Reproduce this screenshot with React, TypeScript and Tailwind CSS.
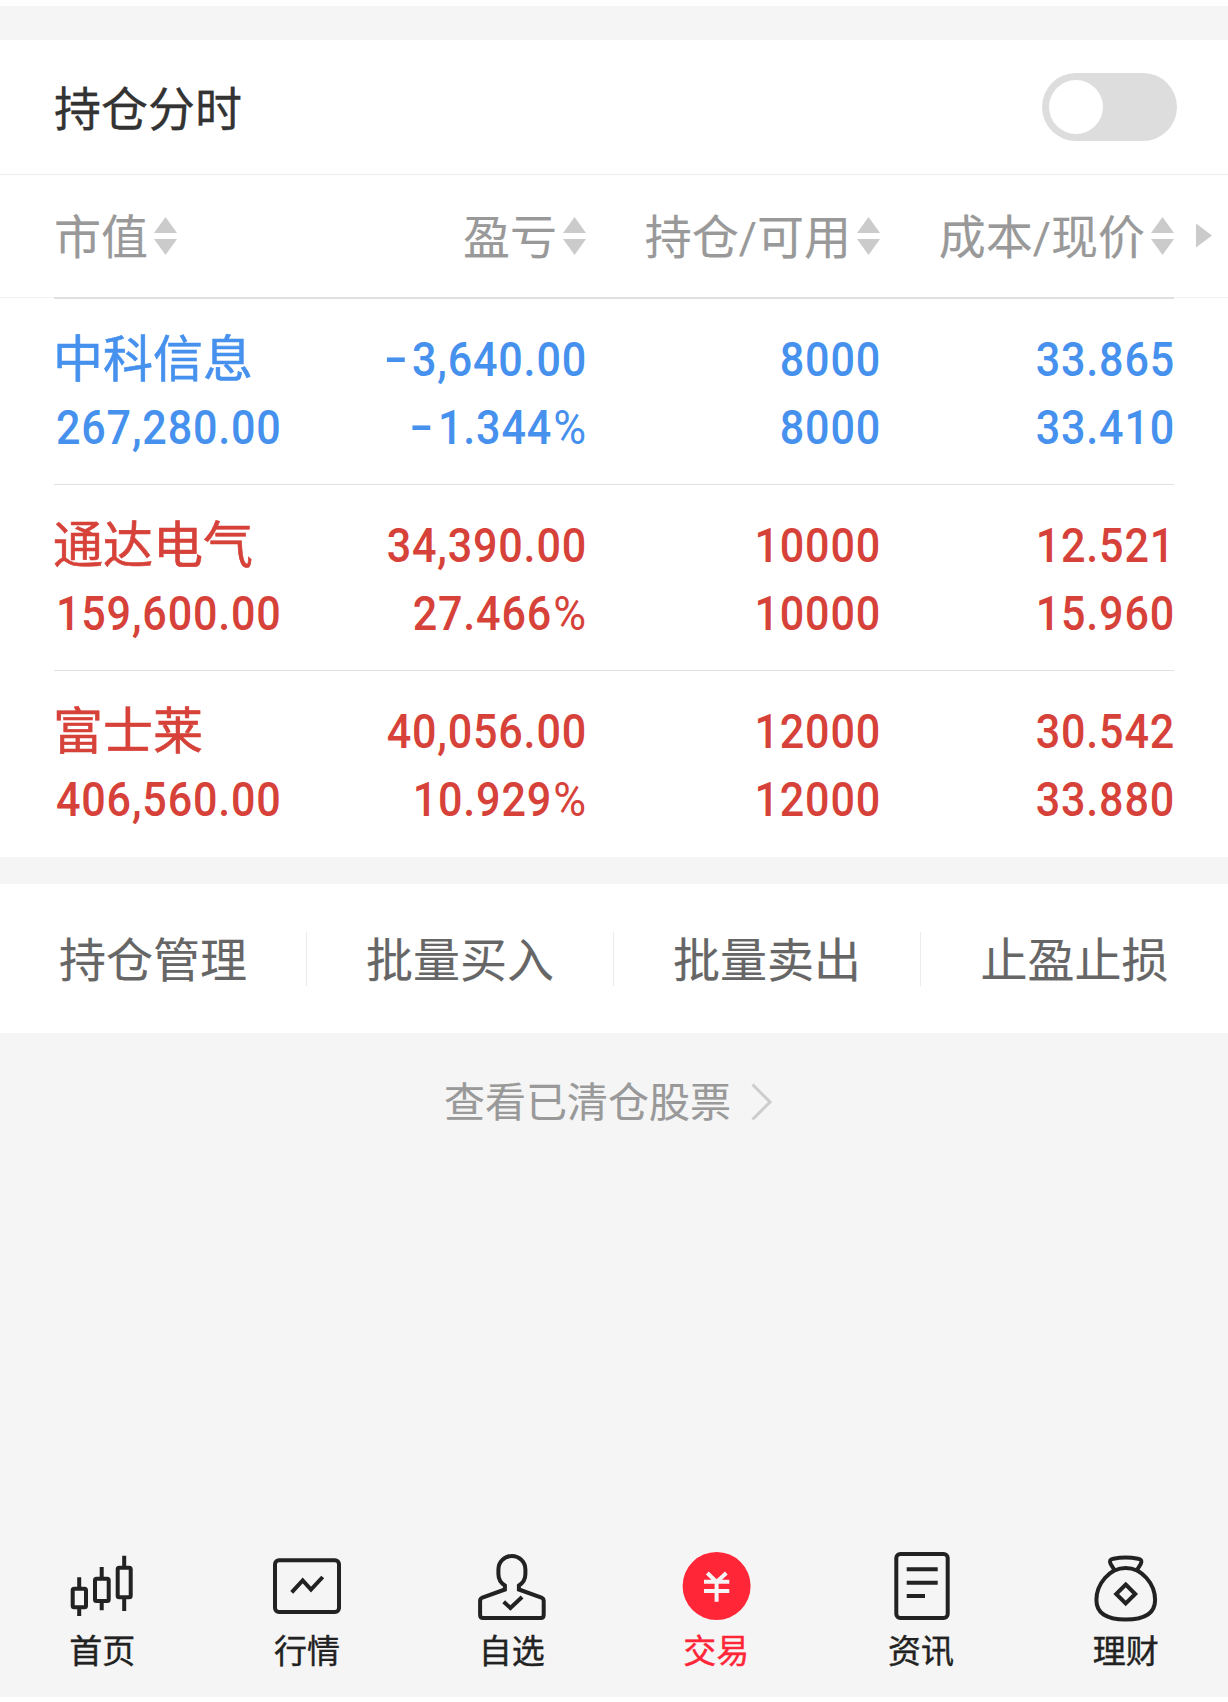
import { Fragment, type ReactNode } from "react";

type Holding = {
  name: string;
  value: string;
  profit: string;
  rate: string;
  held: string;
  available: string;
  cost: string;
  price: string;
  tone: string;
};

const holdings: Holding[] = [
  { name: "中科信息", value: "267,280.00", profit: "-3,640.00", rate: "-1.344", held: "8000", available: "8000", cost: "33.865", price: "33.410", tone: "text-[#4691ee]" },
  { name: "通达电气", value: "159,600.00", profit: "34,390.00", rate: "27.466", held: "10000", available: "10000", cost: "12.521", price: "15.960", tone: "text-[#d64239]" },
  { name: "富士莱", value: "406,560.00", profit: "40,056.00", rate: "10.929", held: "12000", available: "12000", cost: "30.542", price: "33.880", tone: "text-[#d64239]" },
];

const actions = ["持仓管理", "批量买入", "批量卖出", "止盈止损"];

function SortArrows() {
  return (
    <svg width="23" height="38" viewBox="0 0 23 38" fill="#cbcbcb" className="shrink-0">
      <path d="M11.5 0 23 16H0Z" />
      <path d="M11.5 38 23 22H0Z" />
    </svg>
  );
}

function HeaderCell({ label, align }: { label: string; align: string }) {
  return (
    <div className={`flex items-center gap-1.5 whitespace-nowrap ${align}`}>
      <span className="h-[60px] leading-[56px]">
        {label.split("/").map((part, i) => (
          <Fragment key={part}>
            {i > 0 && <span className="font-[Roboto,sans-serif] text-[44px] leading-none">/</span>}
            {part}
          </Fragment>
        ))}
      </span>
      <SortArrows />
    </div>
  );
}

function Num({ text, percent = false, left = false }: { text: string; percent?: boolean; left?: boolean }) {
  const negative = text.startsWith("-");
  return (
    <div
      className={`h-[68px] scale-x-[0.88] font-[Roboto,sans-serif] text-[49px] leading-[68px] font-medium tracking-[0.9px] whitespace-nowrap [-webkit-text-stroke:0px] ${left ? "ml-0.5 origin-left" : "-mr-px origin-right text-right"}`}
    >
      {negative && <span className="mr-1 inline-block origin-right -translate-y-[2px] scale-x-[1.6]">-</span>}
      {negative ? text.slice(1) : text}
      {percent && <span className="ml-[3px] inline-block origin-right scale-x-[1.04] font-normal">%</span>}
    </div>
  );
}

function Row({ item, last }: { item: Holding; last: boolean }) {
  return (
    <div
      className={`mx-[54px] grid h-[186px] grid-cols-[238px_294px_294px_294px] pt-[27px] ${item.tone} ${last ? "" : "border-b border-[#e0e0e0]"}`}
    >
      <div>
        <div className="-ml-px h-[68px] text-[50px] leading-[59px] whitespace-nowrap [-webkit-text-stroke:0.6px]">{item.name}</div>
        <Num text={item.value} left />
      </div>
      <div>
        <Num text={item.profit} />
        <Num text={item.rate} percent />
      </div>
      <div>
        <Num text={item.held} />
        <Num text={item.available} />
      </div>
      <div>
        <Num text={item.cost} />
        <Num text={item.price} />
      </div>
    </div>
  );
}

function Tab({ label, active = false, viewBox = "0 0 80 80", children }: { label: string; active?: boolean; viewBox?: string; children: ReactNode }) {
  return (
    <div className={`flex flex-1 flex-col items-center ${active ? "text-[#ff2638]" : "text-[#222222]"}`}>
      <svg width="80" height="80" viewBox={viewBox} fill="none" stroke="currentColor" strokeWidth="4">
        {children}
      </svg>
      <span className="text-[33px] leading-[46px] [-webkit-text-stroke:0.4px]">{label}</span>
    </div>
  );
}

export default function App() {
  return (
    <div className="flex h-[1702px] w-[1228px] flex-col overflow-hidden bg-white font-['Noto_Sans_CJK_SC',sans-serif] text-[47px] [-webkit-text-stroke:0.15px]">
      <div className="mt-1.5 h-[34px] shrink-0 bg-[#f5f5f5]" />

      <div className="flex h-[135px] shrink-0 items-center justify-between border-b border-[#ececec] pr-[51px] pl-[54px] text-[#333333]">
        <span className="h-[60px] leading-[57px] [-webkit-text-stroke:0.3px]">持仓分时</span>
        <div className="flex h-[68px] w-[135px] items-center rounded-full bg-[#dddddd] pl-[7px]">
          <div className="size-[54px] rounded-full bg-white" />
        </div>
      </div>

      <div className="flex h-[122px] shrink-0 items-center text-[#999999]">
        <div className="ml-[54px] grid w-[1120px] grid-cols-[238px_294px_294px_294px]">
          <HeaderCell label="市值" align="justify-start" />
          <HeaderCell label="盈亏" align="justify-end" />
          <HeaderCell label="持仓/可用" align="justify-end" />
          <HeaderCell label="成本/现价" align="justify-end" />
        </div>
        <svg width="16" height="27" viewBox="0 0 16 27" fill="#cbcbcb" className="-mt-0.5 ml-[22px]">
          <path d="M0 1.5 16 13.5 0 25.5Z" />
        </svg>
      </div>
      <div className="flex h-0.5 shrink-0">
        <div className="h-px w-[54px] bg-[#f2f2f2]" />
        <div className="h-0.5 w-[1120px] bg-[#e0e0e0]" />
        <div className="h-px w-[54px] bg-[#f2f2f2]" />
      </div>

      <div className="h-[558px] shrink-0">
        {holdings.map((item, i) => (
          <Row key={item.name} item={item} last={i === holdings.length - 1} />
        ))}
      </div>

      <div className="h-[27px] shrink-0 bg-[#f5f5f5]" />

      <div className="grid h-[149px] shrink-0 grid-cols-4 items-center text-[#666666]">
        {actions.map((label, i) => (
          <div
            key={label}
            className={`flex h-[54px] items-center justify-center whitespace-nowrap ${i < actions.length - 1 ? "border-r border-[#ececec]" : ""}`}
          >
            <span className="h-[60px] leading-[56px]">{label}</span>
          </div>
        ))}
      </div>

      <div className="flex h-[664px] shrink-0 flex-col justify-between bg-[#f5f5f5]">
        <div className="mt-[39px] ml-[444px] flex h-[60px] items-center text-[41px] text-[#999999]">
          <span className="h-[60px] leading-[55px]">查看已清仓股票</span>
          <svg width="22" height="38" viewBox="0 0 22 38" fill="none" stroke="#cccccc" strokeWidth="3" className="ml-[20px]">
            <path d="M1.5 1.5 19 19 1.5 36.5" />
          </svg>
        </div>

        <div className="flex h-[151px]">
          <Tab label="首页">
            <rect x="10.7" y="42.7" width="13.3" height="18.6" rx="1.5" />
            <rect x="33" y="32.7" width="13.7" height="22.3" rx="1.5" />
            <rect x="55.7" y="21.7" width="13" height="29.6" rx="1.5" />
            <path d="M17.2 31.3V41M17.2 63V70M39.7 21V31M39.7 56.5V64.3M62.2 9.7V20M62.2 53V65" />
          </Tab>
          <Tab label="行情">
            <rect x="8" y="14.3" width="64" height="51.7" rx="4" />
            <path d="M24.7 46.3 35.7 34.5 44 43.5 55.7 31" />
          </Tab>
          <Tab label="自选" viewBox="0.6 0 80 80">
            <path d="M33.5 43.5 11 51.5Q8.7 52.5 8.7 55V69Q8.7 72 11.7 72H69.3Q72.3 72 72.3 69V55Q72.3 52.5 70 51.5L47.5 43.5V39.5C51.5 37 54 33 54 28V23.5A13.5 13.5 0 0 0 27 23.5V28C27 33 29.5 37 33.5 39.5Z" />
            <path d="M32.3 55.7 39 62 50.7 51" />
          </Tab>
          <Tab label="交易" active>
            <circle cx="40.6" cy="40" r="34" fill="currentColor" stroke="none" />
            <path d="M31.3 27 40.6 36 50.3 27M40.6 35.7V55.7M28 35.7H53.3M28 45H53.3" stroke="#f5f5f5" />
          </Tab>
          <Tab label="资讯">
            <rect x="15.3" y="8" width="51.4" height="64" rx="4" />
            <path d="M25.7 23.3H56.7M25.7 36.7H56.7M25.7 50H44" />
          </Tab>
          <Tab label="理财" viewBox="0.6 0 80 80">
            <path d="M40.3 22C24 22 11 38 11 54C11 68 22 73.5 40.3 73.5C58.6 73.5 69.7 68 69.7 54C69.7 38 56.6 22 40.3 22Z" />
            <path d="M29 24 25.3 18Q23 13.5 28 12.7Q40.3 10.5 52.6 12.7Q57.6 13.5 55.3 18L51.6 24" />
            <path d="M40.3 38.5 49.8 48 40.3 57.5 30.8 48Z" />
          </Tab>
        </div>
      </div>
    </div>
  );
}
